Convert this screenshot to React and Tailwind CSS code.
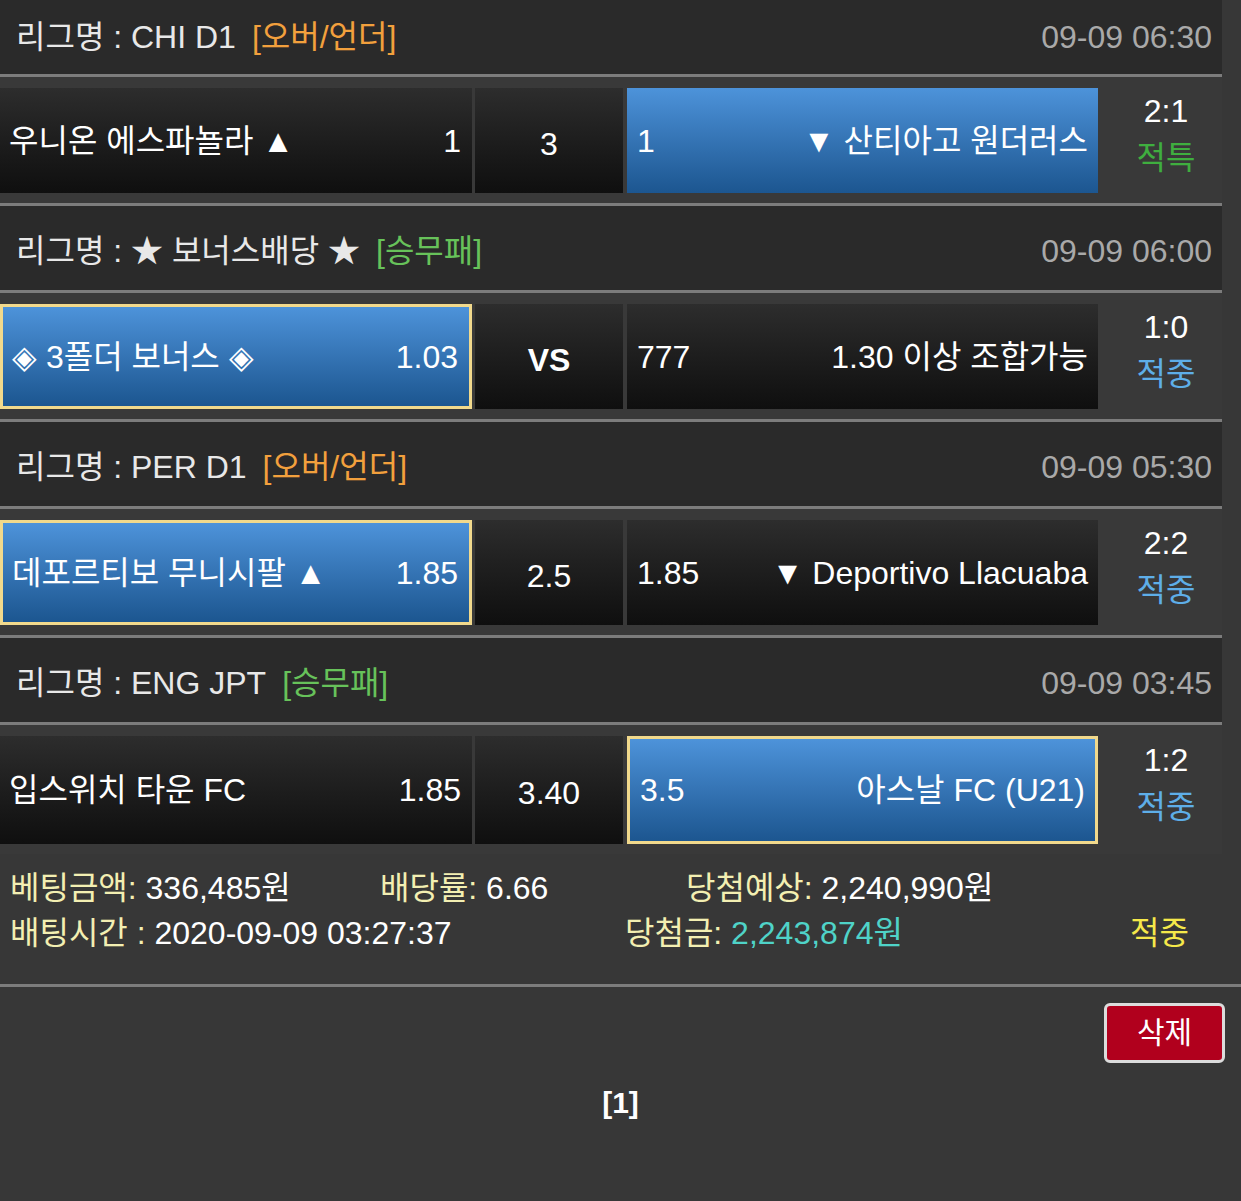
import React from "react";

const FONT = { fontFamily: '"Liberation Sans", "Noto Sans CJK KR", sans-serif' };

function Header({ name, tag, tagColor, time, first }) {
  return (
    <div
      className={
        "flex items-center justify-between border-b-[3px] border-[#7c7c7c] bg-[#2a2a2a] pl-[16px] pr-[10px] " +
        (first ? "h-[77px]" : "h-[87px] pt-[5px]")
      }
    >
      <div className="text-[32px] leading-none text-[#e8e8e8] whitespace-nowrap">
        {name}
        <span className={"ml-[16px] " + tagColor}>{tag}</span>
      </div>
      <div className="text-[32px] leading-none text-[#a9a9a9]">{time}</div>
    </div>
  );
}

function Cell({ left, right, blue, selected, wide, center, bold }) {
  const base = blue
    ? "bg-gradient-to-b from-[#4d93da] to-[#1c5690]"
    : "bg-gradient-to-b from-[#2d2d2d] to-[#0f0f0f]";
  const border = selected ? " border-[3px] border-[#f1d98c]" : "";
  if (center) {
    return (
      <div className={"flex h-full w-[148px] items-center justify-center pt-[6px] " + base}>
        <span className={"text-[32px] leading-none text-white " + (bold ? "font-bold" : "")}>{center}</span>
      </div>
    );
  }
  return (
    <div
      className={
        "flex h-full items-center justify-between whitespace-nowrap " +
        (wide === "left" ? "w-[472px] pl-[9px] pr-[11px]" : "w-[471px] pl-[10px] pr-[10px]") +
        " " +
        base +
        border +
        (selected ? (wide === "left" ? " pl-[9px]" : " pl-[8px] pr-[8px]") : "")
      }
    >
      <span className="text-[32px] leading-none text-white">{left}</span>
      <span className="text-[32px] leading-none text-white">{right}</span>
    </div>
  );
}

function MatchRow({ l, m, r, score, result, resultColor, last }) {
  return (
    <div
      className={
        "flex h-[129px] items-stretch bg-[#393939] pt-[11px] pb-[10px] " +
        (last ? "" : "border-b-[3px] border-[#7c7c7c]")
      }
    >
      <Cell wide="left" {...l} />
      <div className="w-[3px]" />
      <Cell center={m.text} bold={m.bold} />
      <div className="w-[4px]" />
      <Cell wide="right" {...r} />
      <div className="flex w-[124px] flex-col items-center justify-center pb-[12px] pl-[12px]">
        <span className="text-[32px] leading-[47px] text-white">{score}</span>
        <span className={"text-[32px] leading-[47px] " + resultColor}>{result}</span>
      </div>
    </div>
  );
}

export default function App() {
  return (
    <div className="min-h-[1201px] w-[1241px] bg-[#373737]" style={FONT}>
      <div className="w-[1222px]">
        <Header first name="리그명 : CHI D1" tag="[오버/언더]" tagColor="text-[#f2a03d]" time="09-09 06:30" />
        <MatchRow
          l={{ left: "우니온 에스파뇰라 ▲", right: "1" }}
          m={{ text: "3" }}
          r={{ left: "1", right: "▼ 산티아고 원더러스", blue: true }}
          score="2:1"
          result="적특"
          resultColor="text-[#3fae3f]"
        />
        <Header name="리그명 : ★ 보너스배당 ★" tag="[승무패]" tagColor="text-[#67c25a]" time="09-09 06:00" />
        <MatchRow
          l={{ left: "◈ 3폴더 보너스 ◈", right: "1.03", blue: true, selected: true }}
          m={{ text: "VS", bold: true }}
          r={{ left: "777", right: "1.30 이상 조합가능" }}
          score="1:0"
          result="적중"
          resultColor="text-[#5eaee8]"
        />
        <Header name="리그명 : PER D1" tag="[오버/언더]" tagColor="text-[#f2a03d]" time="09-09 05:30" />
        <MatchRow
          l={{ left: "데포르티보 무니시팔 ▲", right: "1.85", blue: true, selected: true }}
          m={{ text: "2.5" }}
          r={{ left: "1.85", right: "▼ Deportivo Llacuaba" }}
          score="2:2"
          result="적중"
          resultColor="text-[#5eaee8]"
        />
        <Header name="리그명 : ENG JPT" tag="[승무패]" tagColor="text-[#67c25a]" time="09-09 03:45" />
        <MatchRow
          last
          l={{ left: "입스위치 타운 FC", right: "1.85" }}
          m={{ text: "3.40" }}
          r={{ left: "3.5", right: "아스날 FC (U21)", blue: true, selected: true }}
          score="1:2"
          result="적중"
          resultColor="text-[#5eaee8]"
        />
      </div>

      <div className="border-b-[3px] border-[#7c7c7c] pt-[12px] pb-[28px] pl-[10px] text-[32px] leading-[45px] whitespace-nowrap">
        <div className="flex">
          <span className="w-[370px]">
            <span className="text-[#f3efb2]">베팅금액:</span> <span className="text-white">336,485원</span>
          </span>
          <span className="w-[306px]">
            <span className="text-[#f3efb2]">배당률:</span> <span className="text-white">6.66</span>
          </span>
          <span>
            <span className="text-[#f3efb2]">당첨예상:</span> <span className="text-white">2,240,990원</span>
          </span>
        </div>
        <div className="flex">
          <span className="w-[615px]">
            <span className="text-[#f3efb2]">배팅시간 :</span> <span className="text-white">2020-09-09 03:27:37</span>
          </span>
          <span className="w-[505px]">
            <span className="text-[#f3efb2]">당첨금:</span> <span className="text-[#4fd3c8]">2,243,874원</span>
          </span>
          <span className="text-[#f5e84a]">적중</span>
        </div>
      </div>

      <div className="flex justify-end pt-[16px] pr-[16px]">
        <button className="flex h-[60px] w-[121px] items-center justify-center rounded-[6px] border-[3px] border-[#dcdcdc] bg-[#b1001d] text-[30px] leading-none text-white">
          삭제
        </button>
      </div>
      <div className="mt-[20px] text-center text-[30px] font-bold leading-[40px] text-white">[1]</div>
    </div>
  );
}
